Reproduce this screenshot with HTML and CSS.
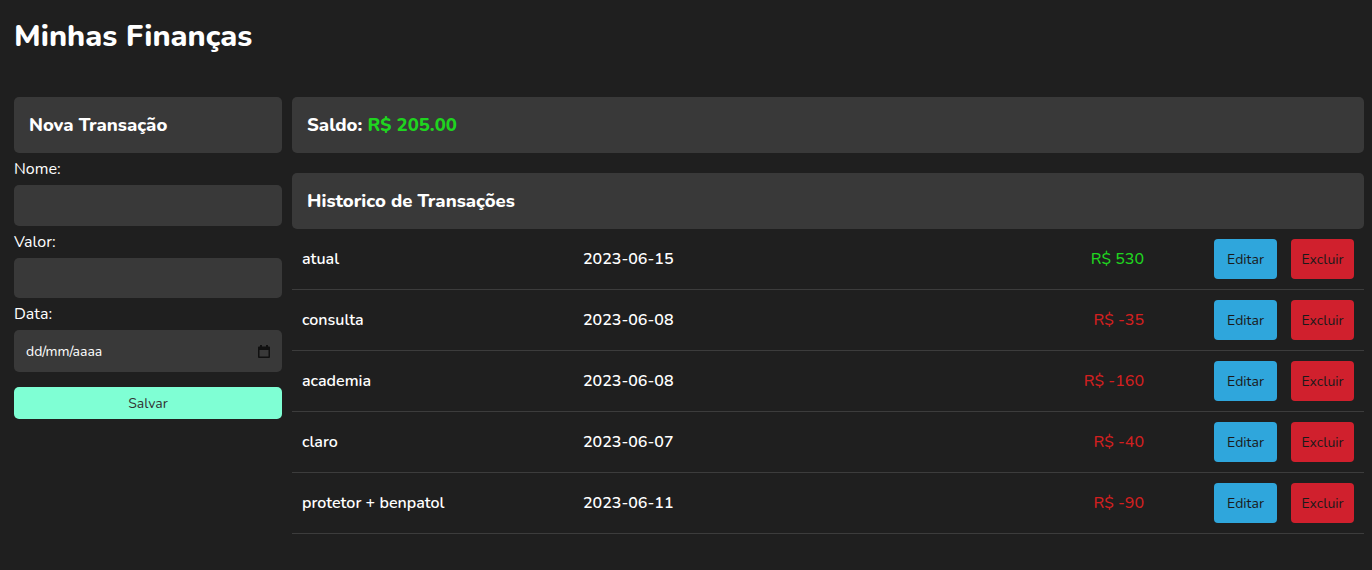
FILE: index.html
```html
<!DOCTYPE html>
<html lang="pt-BR">
<head>
<meta charset="utf-8">
<title>Minhas Finanças</title>
<link rel="stylesheet" href="styles.css">
</head>
<body>
  <h1 class="title">Minhas Finanças</h1>
  <main class="layout">
    <section class="side">
      <div class="card"><h2 class="card-title">Nova Transação</h2></div>
      <form class="form">
        <label class="label">Nome:</label>
        <input class="field" type="text">
        <label class="label">Valor:</label>
        <input class="field" type="text">
        <label class="label">Data:</label>
        <div class="field date">
          <span>dd/mm/aaaa</span>
          <svg class="cal" width="12" height="13" viewBox="0 0 12 13"><path d="M2 0h2v1.5h4V0h2v1.5h1a1 1 0 0 1 1 1V12a1 1 0 0 1-1 1H1a1 1 0 0 1-1-1V2.5a1 1 0 0 1 1-1h1zM1.5 5v6.5h9V5z" fill="#111"/></svg>
        </div>
        <button class="save" type="button">Salvar</button>
      </form>
    </section>
    <section class="content">
      <div class="card"><h2 class="card-title">Saldo: <span class="pos">R$ 205.00</span></h2></div>
      <div class="card gap-top"><h2 class="card-title">Historico de Transações</h2></div>
      <div class="list">
        <div class="row"><span class="c-name">atual</span><span class="c-date">2023-06-15</span><span class="c-val pos">R$ 530</span><button class="btn edit">Editar</button><button class="btn del">Excluir</button></div>
        <div class="row"><span class="c-name">consulta</span><span class="c-date">2023-06-08</span><span class="c-val neg">R$ -35</span><button class="btn edit">Editar</button><button class="btn del">Excluir</button></div>
        <div class="row"><span class="c-name">academia</span><span class="c-date">2023-06-08</span><span class="c-val neg">R$ -160</span><button class="btn edit">Editar</button><button class="btn del">Excluir</button></div>
        <div class="row"><span class="c-name">claro</span><span class="c-date">2023-06-07</span><span class="c-val neg">R$ -40</span><button class="btn edit">Editar</button><button class="btn del">Excluir</button></div>
        <div class="row"><span class="c-name">protetor + benpatol</span><span class="c-date">2023-06-11</span><span class="c-val neg">R$ -90</span><button class="btn edit">Editar</button><button class="btn del">Excluir</button></div>
      </div>
    </section>
  </main>
</body>
</html>
```

FILE: styles.css
```css
* { box-sizing: border-box; }
html, body { background: #1f1f1f; }
body {
  margin: 0;
  padding: 0 8px 0 14px;
  color: #ffffff;
  font-family: "Nunito", "Lato", "Open Sans", sans-serif;
}
.title {
  margin: 0;
  padding-top: 16px;
  height: 97px;
  font-size: 30.5px;
  font-weight: 800;
  line-height: 40px;
}
.layout {
  display: grid;
  grid-template-columns: 1fr 4fr;
  gap: 10px;
  align-items: start;
}
.card {
  background: #393939;
  border-radius: 5px;
  height: 56px;
  display: flex;
  align-items: center;
  padding: 0 15px;
}
.gap-top { margin-top: 20px; }
.card-title {
  margin: 0;
  font-size: 18.5px;
  font-weight: 800;
}
.pos { color: #1fd41f; }
.neg { color: #d21f1f; }
.form { display: flex; flex-direction: column; }
.label {
  font-size: 16px;
  line-height: 20px;
  margin: 6px 0 6px;
}
.field {
  height: 40.6px;
  border: none;
  border-radius: 5px;
  background: #393939;
  color: #fff;
  font: inherit;
  padding: 0 12px;
}
.date {
  height: 42px;
  display: flex;
  align-items: center;
  justify-content: space-between;
  font-size: 14px;
}
.save {
  margin-top: 15px;
  height: 32px;
  border: none;
  border-radius: 5px;
  background: #7fffd4;
  color: #333;
  font: inherit;
  font-size: 14px;
}
.row {
  display: flex;
  align-items: center;
  height: 61px;
  padding: 0 10px;
  border-bottom: 1px solid #3c3c3c;
  font-size: 16px;
  font-weight: 600;
}
.c-name { width: 281px; }
.c-date { flex: 1; }
.c-val { font-weight: 500; margin-right: 70px; }
.btn {
  width: 63px;
  height: 40px;
  border: none;
  border-radius: 4px;
  font: inherit;
  font-size: 14px;
  font-weight: 400;
  color: #1a1a1a;
}
.edit { background: #2fa6dc; }
.del { background: #d0202d; margin-left: 14px; }
```
